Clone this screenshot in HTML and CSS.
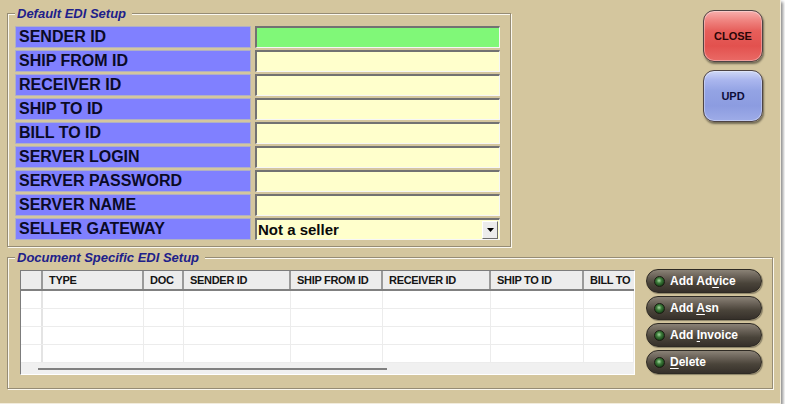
FILE: index.html
```
<!DOCTYPE html>
<html>
<head>
<meta charset="utf-8">
<link rel="stylesheet" href="styles.css">
</head>
<body>
<div class="window">
  <div class="top">
    <fieldset class="group group-default">
      <legend>Default EDI Setup</legend>
      <div class="form-grid">
        <div class="label">SENDER ID</div><div class="field field-green"></div>
        <div class="label">SHIP FROM ID</div><div class="field"></div>
        <div class="label">RECEIVER ID</div><div class="field"></div>
        <div class="label">SHIP TO ID</div><div class="field"></div>
        <div class="label">BILL TO ID</div><div class="field"></div>
        <div class="label">SERVER LOGIN</div><div class="field"></div>
        <div class="label">SERVER PASSWORD</div><div class="field"></div>
        <div class="label">SERVER NAME</div><div class="field"></div>
        <div class="label">SELLER GATEWAY</div>
        <div class="field select"><span class="select-text">Not a seller</span><span class="dd"><svg width="7" height="4" viewBox="0 0 7 4"><path d="M0 0H7L3.5 4Z" fill="#000"/></svg></span></div>
      </div>
    </fieldset>
    <div class="side-buttons">
      <button class="gloss red">CLOSE</button>
      <button class="gloss blue">UPD</button>
    </div>
  </div>
  <fieldset class="group group-docs">
    <legend>Document Specific EDI Setup</legend>
    <div class="docs">
      <div class="table">
        <div class="thead">
          <div class="th"></div>
          <div class="th">TYPE</div>
          <div class="th">DOC</div>
          <div class="th">SENDER ID</div>
          <div class="th">SHIP FROM ID</div>
          <div class="th">RECEIVER ID</div>
          <div class="th">SHIP TO ID</div>
          <div class="th">BILL TO</div>
        </div>
        <div class="tbody">
          <div class="tr"><div></div><div></div><div></div><div></div><div></div><div></div><div></div><div></div></div>
          <div class="tr"><div></div><div></div><div></div><div></div><div></div><div></div><div></div><div></div></div>
          <div class="tr"><div></div><div></div><div></div><div></div><div></div><div></div><div></div><div></div></div>
          <div class="tr"><div></div><div></div><div></div><div></div><div></div><div></div><div></div><div></div></div>
        </div>
        <div class="hscroll"><div class="thumb"></div></div>
      </div>
      <div class="actions">
        <button class="pill"><span class="led"></span><span class="pill-text">Add Ad<u>v</u>ice</span></button>
        <button class="pill"><span class="led"></span><span class="pill-text">Add <u>A</u>sn</span></button>
        <button class="pill"><span class="led"></span><span class="pill-text">Add <u>I</u>nvoice</span></button>
        <button class="pill"><span class="led"></span><span class="pill-text"><u>D</u>elete</span></button>
      </div>
    </div>
  </fieldset>
</div>
</body>
</html>
```
FILE: styles.css
```
html, body {
  margin: 0;
  padding: 0;
  background: #ffffff;
}
body {
  font-family: "Liberation Sans", Arial, sans-serif;
}
.window {
  box-sizing: border-box;
  width: 781px;
  height: 404px;
  background: #d4c69e;
  border-right: 1px solid #f2ecdc;
  border-bottom: 1px solid #f2ecdc;
  box-shadow: 2px 2px 3px rgba(0, 0, 0, 0.45);
  padding: 0 0 0 7px;
}
.top {
  display: flex;
  align-items: flex-start;
}
.group {
  margin: 0;
  border: 1px solid #968c74;
  box-shadow: inset 1px 1px 0 #fbf8ef, 1px 1px 0 #fbf8ef;
  min-width: 0;
}
.group legend {
  font-family: "Liberation Sans", Arial, sans-serif;
  font-size: 13px;
  font-weight: bold;
  font-style: italic;
  line-height: 15px;
  color: #20208a;
  background: #d4c69e;
  padding: 0 6px 0 2px;
  margin-left: 0;
}
.group-docs legend {
  margin-left: -5px;
}
.group-default {
  box-sizing: border-box;
  width: 504px;
  margin-top: 6px;
  padding: 5px 9px 6px 7px;
}
.form-grid {
  display: grid;
  grid-template-columns: 236px 245px;
  grid-auto-rows: 22px;
  column-gap: 4px;
  row-gap: 2px;
}
.label {
  box-sizing: border-box;
  background: #8080ff;
  border: 1px solid #b0b0c4;
  font-size: 16px;
  font-weight: bold;
  color: #0a0a26;
  line-height: 20px;
  padding-left: 3px;
  white-space: nowrap;
}
.field {
  box-sizing: border-box;
  background: #ffffcc;
  border-style: solid;
  border-width: 2px 1px 1px 2px;
  border-color: #727272 #f6f6f6 #f6f6f6 #727272;
}
.field-green {
  background: #80f878;
}
.select {
  display: flex;
  align-items: center;
  justify-content: space-between;
  padding: 0 1px 0 1px;
}
.select-text {
  font-size: 15px;
  font-weight: bold;
  color: #0a0a0a;
}
.dd {
  box-sizing: border-box;
  width: 16px;
  height: 18px;
  background: #ececec;
  border-style: solid;
  border-width: 1px;
  border-color: #ffffff #6c6c6c #6c6c6c #ffffff;
  display: flex;
  align-items: center;
  justify-content: center;
}
.side-buttons {
  margin-left: auto;
  margin-right: 17px;
  padding-top: 10px;
  display: flex;
  flex-direction: column;
  gap: 8px;
}
.gloss {
  box-sizing: border-box;
  width: 60px;
  height: 52px;
  border-radius: 11px;
  border: 1px solid #4e4444;
  font-family: "Liberation Sans", Arial, sans-serif;
  font-size: 11px;
  font-weight: bold;
  padding: 0;
  box-shadow: 1px 2px 2px rgba(0, 0, 0, 0.45), inset 0 0 0 1px rgba(255, 255, 255, 0.35);
}
.red {
  color: #2a0606;
  background: linear-gradient(to bottom, #f7b0ae 0%, #f08682 18%, #e65e5a 40%, #e2514e 70%, #ea6a66 100%);
}
.blue {
  color: #0e0e3a;
  background: linear-gradient(to bottom, #d0d8f6 0%, #aab6ee 18%, #93a3e4 40%, #8c9ce0 70%, #9eace8 100%);
}
.group-docs {
  box-sizing: border-box;
  width: 766px;
  margin-top: 3px;
  padding: 5px 9px 13px 12px;
}
.docs {
  display: flex;
  gap: 11px;
  align-items: flex-start;
}
.table {
  box-sizing: border-box;
  width: 615px;
  height: 105px;
  background: #ffffff;
  border-style: solid;
  border-width: 1px;
  border-color: #7c7c7c #ffffff #ffffff #7c7c7c;
  display: flex;
  flex-direction: column;
  overflow: hidden;
}
.thead, .tr {
  display: grid;
  grid-template-columns: 22px 101px 40px 107px 92px 108px 93px 1fr;
}
.thead {
  height: 18px;
  background: #ececec;
  border-bottom: 2px solid #808080;
}
.th {
  box-sizing: border-box;
  border-right: 2px solid #9a9a9a;
  font-family: "Liberation Sans", Arial, sans-serif;
  font-size: 11px;
  letter-spacing: -0.3px;
  font-weight: bold;
  color: #141414;
  line-height: 18px;
  padding-left: 6px;
  white-space: nowrap;
  overflow: hidden;
}
.th:last-child {
  border-right: none;
}
.tbody {
  display: flex;
  flex-direction: column;
}
.tr {
  height: 17px;
  border-bottom: 1px solid #ececec;
}
.tr > div {
  border-right: 1px solid #ececec;
}
.tr > div:first-child {
  border-right: 2px solid #e4e4e4;
}
.hscroll {
  flex: 1;
  background: #f0f0f0;
  display: flex;
  align-items: center;
  padding-left: 17px;
}
.thumb {
  width: 349px;
  height: 2px;
  background: #808080;
}
.actions {
  display: flex;
  flex-direction: column;
  gap: 3px;
  margin-top: -1px;
}
.pill {
  box-sizing: border-box;
  width: 116px;
  height: 24px;
  border-radius: 12px;
  border: 1px solid #2e2a24;
  background: linear-gradient(to bottom, #8a8276 0%, #6a6258 30%, #4a443a 60%, #36302a 100%);
  box-shadow: 1px 1px 1px rgba(0, 0, 0, 0.35);
  color: #ffffff;
  font-family: "Liberation Sans", Arial, sans-serif;
  font-size: 12px;
  font-weight: bold;
  text-align: left;
  padding: 0 0 0 7px;
  display: flex;
  align-items: center;
  gap: 5px;
}
.pill-text {
  white-space: nowrap;
}
.led {
  box-sizing: border-box;
  width: 11px;
  height: 11px;
  border-radius: 50%;
  border: 1px solid #1a1c12;
  background: radial-gradient(circle at 45% 40%, #a6d8a0 0%, #3c7a3a 35%, #1c4a1c 70%, #0c200c 100%);
  flex: none;
}
.pill u {
  text-decoration-thickness: 1px;
  text-underline-offset: 2px;
}
```
